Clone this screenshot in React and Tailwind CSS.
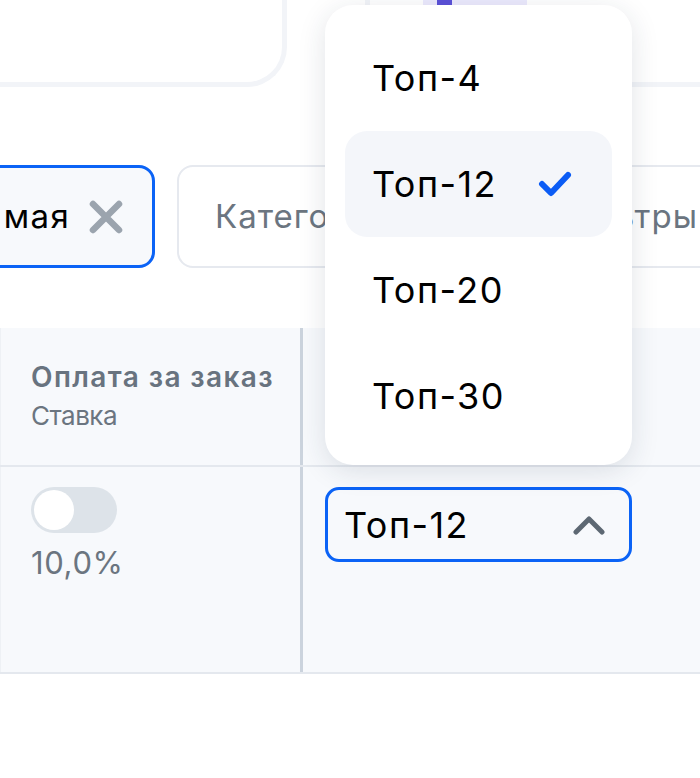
import React, { useState } from "react";

const options = ["Топ-4", "Топ-12", "Топ-20", "Топ-30"];

const CheckIcon = () => (
  <svg width="34" height="28" viewBox="0 0 34 28" fill="none">
    <path d="M4 14 L13 23 L30 5" stroke="#0b5cf5" strokeWidth="6" strokeLinecap="round" strokeLinejoin="round" />
  </svg>
);

const ChevronUp = () => (
  <svg width="32" height="22" viewBox="0 0 32 22" fill="none">
    <path d="M3 18 L16 5 L29 18" stroke="#5d6873" strokeWidth="5" strokeLinecap="round" strokeLinejoin="round" />
  </svg>
);

const CrossIcon = () => (
  <svg width="36" height="36" viewBox="0 0 36 36" fill="none">
    <path d="M5 5 L31 31 M31 5 L5 31" stroke="#9ba4ae" strokeWidth="6.5" strokeLinecap="round" />
  </svg>
);

const App = () => {
  const [selected, setSelected] = useState("Топ-12");

  return (
    <div className="relative w-[700px] h-[778px] overflow-hidden bg-white font-['Inter',sans-serif]">
      {/* top cards */}
      <div className="flex h-[87px]">
        <div className="-ml-10 w-[327px] shrink-0 border-[5px] border-t-0 border-[#f2f4f8] rounded-br-[40px]" />
        <div className="ml-[78px] flex-1 -mr-10 border-[5px] border-t-0 border-[#f2f4f8] rounded-bl-[40px]">
          <div className="ml-[53px] w-[104px] h-[6px] bg-[#eceafd]">
            <div className="ml-[14px] w-[15px] h-[5px] bg-[#5b51d8]" />
          </div>
        </div>
      </div>

      {/* filters */}
      <div className="mt-[78px] flex h-[103px]">
        <div className="-ml-10 w-[195px] shrink-0 flex items-center justify-end gap-[18px] pr-[28px] border-[3px] border-[#0b63f6] rounded-[16px] bg-[#f7f9fc]">
          <span className="text-[33px] text-black tracking-[0.04em]">мая</span>
          <CrossIcon />
        </div>
        <div className="ml-[22px] w-[330px] shrink-0 flex items-center pl-[36px] border-2 border-[#e6e9ef] rounded-[16px]">
          <span className="text-[33px] text-[#6b7580] tracking-[0.03em]">Категории</span>
        </div>
        <div className="ml-[14px] w-[220px] shrink-0 flex items-center pl-[24px] border-2 border-[#e6e9ef] rounded-[16px]">
          <span className="text-[33px] text-[#6b7580] tracking-[0.03em]">Фильтры</span>
        </div>
      </div>

      {/* table */}
      <div className="mt-[60px]">
        <div className="flex h-[139px] bg-[#f7f9fc] border-b-2 border-[#e4e8ee]">
          <div className="w-[303px] shrink-0 flex flex-col justify-center pl-[30px] border-r-[3px] border-[#cbd3dd] border-l border-l-[#eef1f5]">
            <span className="text-[28px] font-semibold text-[#68737f] tracking-[0.05em] leading-[38px]">Оплата за заказ</span>
            <span className="text-[26px] text-[#6b7580] tracking-[-0.02em] leading-[40px]">Ставка</span>
          </div>
          <div className="flex-1" />
        </div>
        <div className="flex h-[207px] bg-[#f7f9fc] border-b-2 border-[#e4e8ee]">
          <div className="w-[303px] shrink-0 pl-[30px] pt-[20px] border-r-[3px] border-[#cbd3dd] border-l border-l-[#eef1f5]">
            <div className="w-[86px] h-[46px] rounded-full bg-[#dde3e9] p-[3px]">
              <div className="w-[40px] h-[40px] rounded-full bg-white" />
            </div>
            <div className="mt-[14px] text-[31px] leading-none text-[#6b7580] tracking-[0.02em]">10,0%</div>
          </div>
          <div className="flex-1 pl-[22px] pt-[20px]">
            <div className="w-[307px] h-[75px] flex items-center justify-between pl-[16px] pr-[24px] border-[3px] border-[#0b63f6] rounded-[14px] bg-[#f7f9fc]">
              <span className="text-[36px] text-black tracking-[0.04em]">{selected}</span>
              <ChevronUp />
            </div>
          </div>
        </div>
      </div>

      {/* dropdown menu */}
      <div className="absolute left-[325px] top-[5px] w-[307px] h-[460px] bg-white rounded-[28px] shadow-[0_6px_28px_rgba(30,45,70,0.13)] px-[20px] pt-[20px]">
        {options.map((opt) => (
          <button
            key={opt}
            onClick={() => setSelected(opt)}
            className={`w-full h-[106px] flex items-center justify-between pl-[27px] pr-[40px] rounded-[22px] text-left ${
              opt === selected ? "bg-[#f4f6fa]" : "bg-white"
            }`}
          >
            <span className="text-[36px] text-black tracking-[0.04em]">{opt}</span>
            {opt === selected && <CheckIcon />}
          </button>
        ))}
      </div>
    </div>
  );
};

export default App;
